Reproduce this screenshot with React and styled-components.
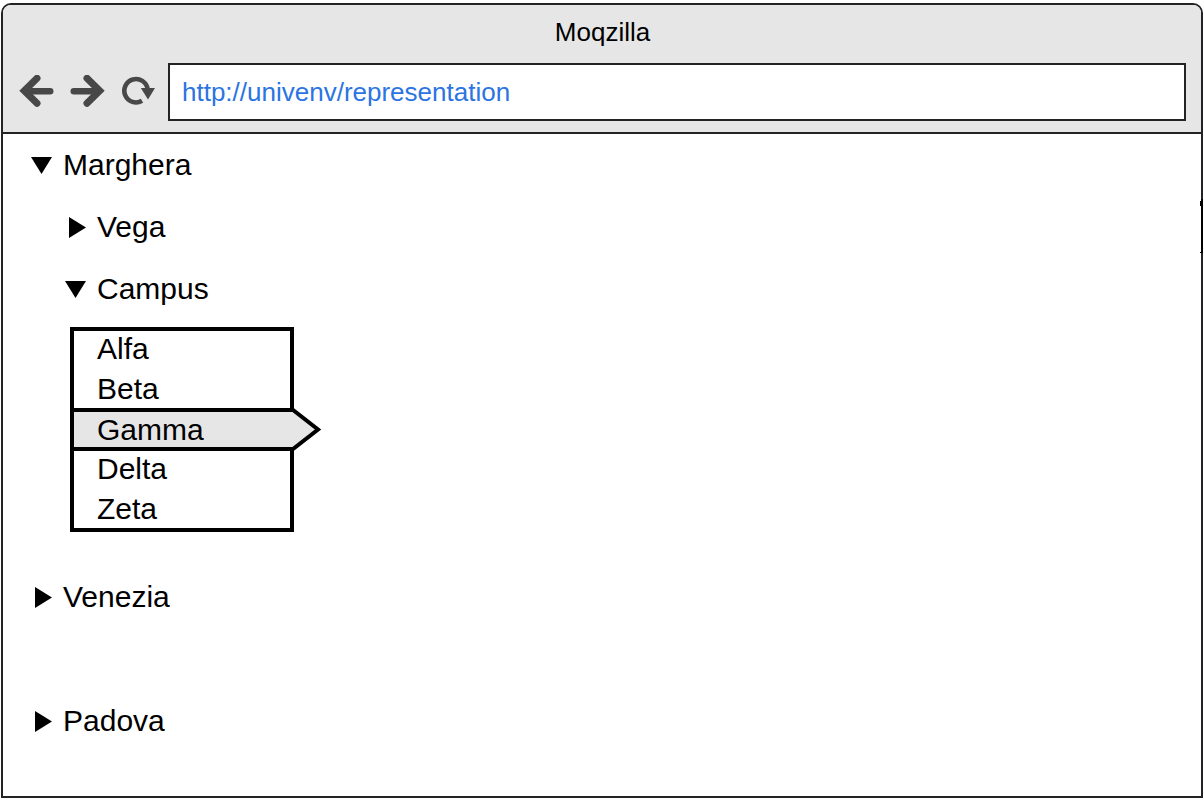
import React, { useState } from "react";
import styled, { createGlobalStyle } from "styled-components";

const GlobalStyle = createGlobalStyle`
  *, *::before, *::after { box-sizing: border-box; }
  body {
    margin: 0;
    background: #fff;
    color: #000;
    font-family: "Liberation Sans", Arial, Helvetica, sans-serif;
  }
`;

const Page = styled.div`
  display: flex;
  min-height: 100vh;
  padding: 3px 1px 4px;
`;

const BrowserWindow = styled.div`
  position: relative;
  flex: 1;
  min-width: 0;
  display: flex;
  flex-direction: column;
  border: 2px solid #222324;
  border-radius: 10px 10px 0 0;
`;

const Header = styled.header`
  display: flex;
  flex-direction: column;
  gap: 4px;
  padding: 0 15px 11px 16px;
  background: #e6e6e6;
  border-bottom: 2px solid #222324;
  border-radius: 8px 8px 0 0;
`;

const Title = styled.h1`
  margin: 0;
  font-size: 26px;
  font-weight: 400;
  line-height: 54px;
  text-align: center;
`;

const Toolbar = styled.div`
  display: flex;
  align-items: center;
  gap: 13px;
`;

const Tools = styled.div`
  display: flex;
  align-items: center;
  gap: 16px;
`;

const ToolButton = styled.button`
  display: flex;
  flex: none;
  padding: 0;
  border: 0;
  background: none;
  color: #484848;
  cursor: pointer;
`;

const AddressForm = styled.form`
  flex: 1;
  min-width: 0;
  display: flex;
`;

const AddressInput = styled.input`
  flex: 1;
  min-width: 0;
  height: 58px;
  padding: 0 12px;
  border: 2px solid #222324;
  border-radius: 0;
  background: #fff;
  color: #2b74e2;
  font-family: inherit;
  font-size: 26px;
`;

const Content = styled.main`
  flex: 1;
  padding: 14px 28px 56px;
`;

const Places = styled.ul`
  list-style: none;
  margin: 0;
  padding: 0;
`;

const Branch = styled.li`
  margin-top: ${({ $space = 0 }) => $space}px;
  padding-left: ${({ $nested }) => ($nested ? 34 : 0)}px;
`;

const Toggle = styled.button`
  display: flex;
  align-items: center;
  gap: 11px;
  padding: 0;
  border: 0;
  background: none;
  color: inherit;
  font-family: inherit;
  font-size: 30px;
  line-height: 34px;
  cursor: pointer;
`;

const MarkerBox = styled.span`
  display: flex;
  justify-content: flex-end;
  width: 21px;
`;

const OptionList = styled.ul`
  list-style: none;
  display: flex;
  flex-direction: column;
  gap: 4px;
  width: 224px;
  margin: 21px 0 0 5px;
  padding: 0 0 1px;
  border: 4px solid #000;
`;

const Option = styled.li`
  position: relative;
  height: 36px;
  ${({ $selected }) =>
    $selected &&
    `
    height: 43px;
    margin: -3px 0 -4px;
    border: solid #000;
    border-width: 4px 0;
    background: #e6e6e6;
  `}
`;

const OptionButton = styled.button`
  display: block;
  width: 100%;
  padding: 0 0 0 23px;
  border: 0;
  background: none;
  color: inherit;
  font-family: inherit;
  font-size: 30px;
  line-height: 36px;
  text-align: left;
  cursor: pointer;
`;

const Pointer = styled.svg`
  position: absolute;
  top: -4px;
  left: 100%;
`;

const EdgeMark = styled.svg`
  position: absolute;
  top: 194px;
  right: -2px;
`;

function Marker({ open }) {
  return (
    <MarkerBox aria-hidden="true">
      {open ? (
        <svg width="21" height="17" viewBox="0 0 21 17">
          <path d="M0 0H21L10.5 17Z" />
        </svg>
      ) : (
        <svg width="17" height="21" viewBox="0 0 17 21">
          <path d="M0 0V21L17 10.5Z" />
        </svg>
      )}
    </MarkerBox>
  );
}

function Arrow({ flip }) {
  return (
    <svg width="35" height="34" viewBox="0 0 35 34" aria-hidden="true">
      <g
        transform={flip ? "translate(35 0) scale(-1 1)" : undefined}
        stroke="currentColor"
        strokeLinecap="round"
        fill="none"
      >
        <path d="M18 3.3L5.3 15.8L18 28.3" strokeWidth="7" />
        <path d="M8 16.2H31.2" strokeWidth="6.5" />
      </g>
    </svg>
  );
}

function Reload() {
  return (
    <svg width="34" height="34" viewBox="0 0 34 34" aria-hidden="true">
      <path
        d="M21 25.8A11.7 11.7 0 1 1 26.6 14"
        fill="none"
        stroke="currentColor"
        strokeWidth="4.6"
      />
      <path d="M19.8 13H34L27 24.6Z" fill="currentColor" />
    </svg>
  );
}

const OPTIONS = ["Alfa", "Beta", "Gamma", "Delta", "Zeta"];

export default function App() {
  const [open, setOpen] = useState({ Marghera: true, Campus: true });
  const [selected, setSelected] = useState("Gamma");
  const [url, setUrl] = useState("http://univenv/representation");

  const toggle = (name) => (
    <Toggle
      type="button"
      aria-expanded={!!open[name]}
      onClick={() => setOpen((o) => ({ ...o, [name]: !o[name] }))}
    >
      <Marker open={open[name]} />
      {name}
    </Toggle>
  );

  return (
    <>
      <GlobalStyle />
      <Page>
        <BrowserWindow>
          <Header>
            <Title>Moqzilla</Title>
            <Toolbar>
              <Tools>
                <ToolButton type="button" aria-label="Back">
                  <Arrow />
                </ToolButton>
                <ToolButton type="button" aria-label="Forward">
                  <Arrow flip />
                </ToolButton>
                <ToolButton type="button" aria-label="Reload">
                  <Reload />
                </ToolButton>
              </Tools>
              <AddressForm onSubmit={(e) => e.preventDefault()}>
                <AddressInput
                  type="text"
                  aria-label="Address"
                  spellCheck={false}
                  value={url}
                  onChange={(e) => setUrl(e.target.value)}
                />
              </AddressForm>
            </Toolbar>
          </Header>
          <Content>
            <Places>
              <Branch>
                {toggle("Marghera")}
                {open.Marghera && (
                  <Places>
                    <Branch $nested $space={28}>
                      {toggle("Vega")}
                    </Branch>
                    <Branch $nested $space={28}>
                      {toggle("Campus")}
                      {open.Campus && (
                        <OptionList>
                          {OPTIONS.map((name) => (
                            <Option key={name} $selected={name === selected}>
                              <OptionButton
                                type="button"
                                aria-pressed={name === selected}
                                onClick={() => setSelected(name)}
                              >
                                {name}
                              </OptionButton>
                              {name === selected && (
                                <Pointer width="32" height="43" viewBox="0 0 32 43" aria-hidden="true">
                                  <path
                                    d="M0 2H3L28 21.5L3 41H0"
                                    fill="#e6e6e6"
                                    stroke="#000"
                                    strokeWidth="4"
                                  />
                                </Pointer>
                              )}
                            </Option>
                          ))}
                        </OptionList>
                      )}
                    </Branch>
                  </Places>
                )}
              </Branch>
              <Branch $space={48}>{toggle("Venezia")}</Branch>
              <Branch $space={90}>{toggle("Padova")}</Branch>
            </Places>
          </Content>
          <EdgeMark width="3" height="54" viewBox="0 0 3 54" aria-hidden="true">
            <path d="M1 0H3V54H0V53H1V7H0V2H1Z" />
          </EdgeMark>
        </BrowserWindow>
      </Page>
    </>
  );
}
